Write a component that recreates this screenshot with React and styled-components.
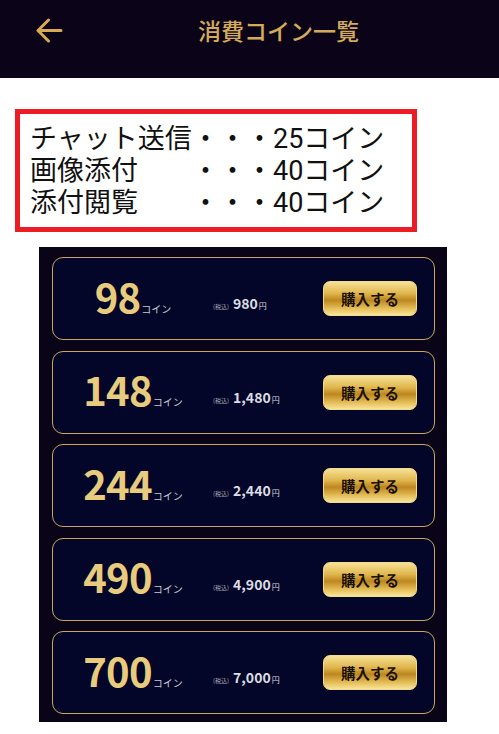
import React from 'react';
import styled, {createGlobalStyle} from 'styled-components';

const GlobalStyle = createGlobalStyle`
  * { box-sizing: border-box; }
  body {
    margin: 0;
    background: #ffffff;
    font-family: Roboto, "Noto Sans CJK JP", sans-serif;
  }
`;

const plans = [
  {id: 1, coin: '98', price: '980'},
  {id: 2, coin: '148', price: '1,480'},
  {id: 3, coin: '244', price: '2,440'},
  {id: 4, coin: '490', price: '4,900'},
  {id: 5, coin: '700', price: '7,000'},
];

const costs = [
  {label: 'チャット送信', value: '25'},
  {label: '画像添付', value: '40'},
  {label: '添付閲覧', value: '40'},
];

const Page = styled.div`
  width: 100%;
  min-height: 734px;
  display: flex;
  flex-direction: column;
`;

const Header = styled.header`
  height: 78px;
  background-color: #0b0419;
  display: flex;
  align-items: flex-start;
  padding: 18px 0 0 35px;
`;

const BackButton = styled.div`
  width: 28px;
  height: 25px;
  display: flex;
  cursor: pointer;
`;

const Title = styled.h1`
  margin: -4px 0 0 135px;
  font-family: "Noto Sans CJK JP", sans-serif;
  font-size: 23px;
  font-weight: 500;
  line-height: 32px;
  color: #d4aa5c;
`;

const Notice = styled.div`
  margin: 31px 0 0 15px;
  width: 402px;
  height: 123px;
  border: 5px solid #ec1c24;
  padding: 9px 0 0 10px;
  display: grid;
  grid-template-columns: 6em auto;
  grid-auto-rows: 32px;
  font-size: 27px;
  line-height: 32px;
  color: #111111;
`;

const Label = styled.span`
  white-space: nowrap;
`;

const Value = styled.span`
  white-space: nowrap;
`;

const Panel = styled.div`
  margin: 15px 0 0 39px;
  width: 408px;
  padding: 10px 12px 8px 13px;
  background-color: #0a0419;
  display: flex;
  flex-direction: column;
  gap: 10.5px;
`;

const Card = styled.div`
  height: 83px;
  border: 1.5px solid #c9a65c;
  border-radius: 11px;
  background-color: #030629;
  display: grid;
  grid-template-columns: 160px 1fr auto;
  align-items: center;
  padding-right: 17px;
  font-family: "Noto Sans CJK JP", sans-serif;
`;

const Amount = styled.div`
  display: flex;
  align-items: baseline;
  justify-content: center;
  padding-bottom: 6px;
`;

const Number = styled.span`
  font-size: 40px;
  font-weight: 700;
  line-height: 1;
  color: #e8cb7c;
  letter-spacing: -0.8px;
`;

const Unit = styled.span`
  font-size: 10px;
  color: #c9c9cf;
  margin-left: 1px;
`;

const Price = styled.div`
  display: flex;
  align-items: baseline;
  color: #dcdce2;
  padding-top: 9px;
`;

const Tax = styled.span`
  font-size: 6px;
  color: #a9a9b2;
  margin-right: 4px;
`;

const Yen = styled.span`
  font-size: 14px;
  font-weight: 700;
`;

const YenMark = styled.span`
  font-size: 8px;
  margin-left: 1px;
`;

const BuyButton = styled.button`
  width: 94px;
  height: 35px;
  border: 1px solid #f4dc8c;
  border-radius: 7px;
  background: linear-gradient(180deg, #f6e096 0%, #e0b64c 35%, #bd8620 55%, #e4bd57 80%, #f7e49a 100%);
  font-family: "Noto Sans CJK JP", sans-serif;
  font-size: 14.5px;
  font-weight: 700;
  color: #1a1206;
  cursor: pointer;
  padding: 0;
`;

const ArrowIcon = () => (
  <svg width="28" height="25" viewBox="0 0 28 25" fill="none">
    <path d="M26 12.5H3M13.5 2L3 12.5L13.5 23" stroke="#d9aa55" strokeWidth="3" strokeLinecap="round" strokeLinejoin="round" />
  </svg>
);

const App = () => {
  return (
    <Page>
      <GlobalStyle />
      <Header>
        <BackButton>
          <ArrowIcon />
        </BackButton>
        <Title>消費コイン一覧</Title>
      </Header>
      <Notice>
        {costs.map((c) => (
          <React.Fragment key={c.label}>
            <Label>{c.label}</Label>
            <Value>・・・{c.value}コイン</Value>
          </React.Fragment>
        ))}
      </Notice>
      <Panel>
        {plans.map((p) => (
          <Card key={p.id}>
            <Amount>
              <Number>{p.coin}</Number>
              <Unit>コイン</Unit>
            </Amount>
            <Price>
              <Tax>(税込)</Tax>
              <Yen>{p.price}</Yen>
              <YenMark>円</YenMark>
            </Price>
            <BuyButton>購入する</BuyButton>
          </Card>
        ))}
      </Panel>
    </Page>
  );
};

export default App;
